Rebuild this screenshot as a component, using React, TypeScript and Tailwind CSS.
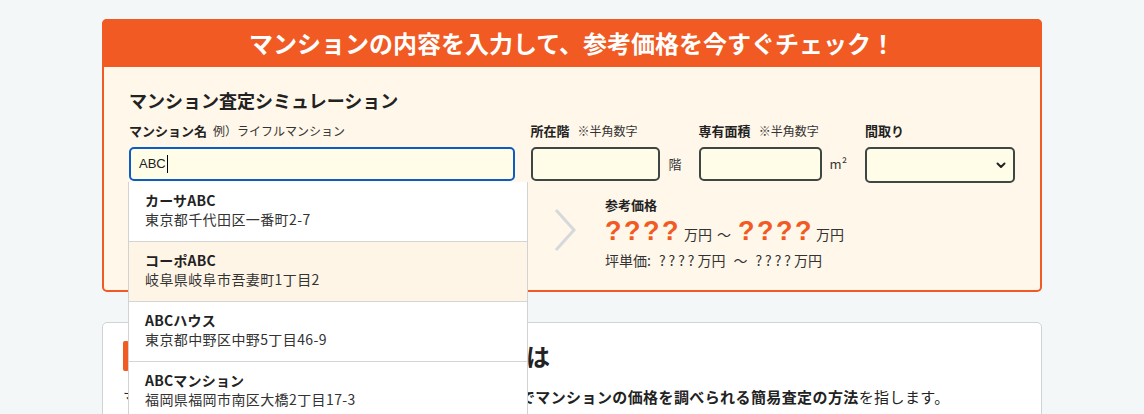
import React from "react";

const items = [
  { name: "カーサABC", addr: "東京都千代田区一番町2-7", hl: false },
  { name: "コーポABC", addr: "岐阜県岐阜市吾妻町1丁目2", hl: true },
  { name: "ABCハウス", addr: "東京都中野区中野5丁目46-9", hl: false },
  { name: "ABCマンション", addr: "福岡県福岡市南区大橋2丁目17-3", hl: false },
  { name: "ABCレジデンス", addr: "大阪府大阪市北区梅田1丁目1-1", hl: false },
];

export default function App() {
  return (
    <div
      className="min-h-screen bg-[#f4f7f8] pt-[19px] text-[#222]"
      style={{ fontFamily: '"Noto Sans CJK JP", "Noto Sans", sans-serif' }}
    >
      <div className="mx-auto w-[940px]">
        {/* Simulation card */}
        <div className="rounded-[5px] border-2 border-[#f15a22] bg-[#fff7e9]">
          <div className="-mx-[2px] -mt-[2px] flex h-[48px] items-center justify-center rounded-t-[5px] bg-[#f15a22] text-[24px] font-bold leading-none text-white">
            マンションの内容を入力して、参考価格を今すぐチェック！
          </div>
          <div className="px-[25px] pt-[20px] pb-[20px]">
            <div className="text-[18px] font-bold leading-[26px]">マンション査定シミュレーション</div>
            <div className="mt-[8px] flex">
              {/* name */}
              <div className="relative w-[386px]">
                <div className="flex items-baseline text-[13px] font-bold leading-[20px]">
                  マンション名
                  <span className="ml-[6px] text-[12px] font-normal text-[#333]">例）ライフルマンション</span>
                </div>
                <div className="mt-[6px] flex h-[34px] items-center rounded-[5px] border-2 border-[#0b5cc5] bg-[#fffde8] px-[8px] text-[13px]" style={{ fontFamily: '"Liberation Sans", sans-serif' }}>
                  ABC<span className="ml-px h-[18px] w-px bg-black" />
                </div>
                <div className="absolute left-[-1px] top-[calc(100%-1px)] z-10 w-[400px] border-x border-[#d2d2d2] bg-white">
                  {items.map((it) => (
                    <div
                      key={it.name}
                      className={`h-[60px] border-b border-[#d4d4d4] px-[16px] pt-[9px] text-[14px] leading-[19px] ${it.hl ? "bg-[#fff5e6]" : "bg-white"}`}
                    >
                      <div className="font-bold tracking-[0.2px]">{it.name}</div>
                      <div className="tracking-[0.4px] text-[#333]">{it.addr}</div>
                    </div>
                  ))}
                </div>
              </div>
              {/* floor */}
              <div className="ml-[16px]">
                <div className="flex items-baseline text-[13px] font-bold leading-[20px]">
                  所在階
                  <span className="ml-[8px] text-[12px] font-normal text-[#333]">※半角数字</span>
                </div>
                <div className="mt-[6px] flex items-center">
                  <div className="h-[34px] w-[129px] rounded-[5px] border-2 border-[#3f4745] bg-[#fffde8]" />
                  <span className="ml-[9px] text-[13px] text-[#333]">階</span>
                </div>
              </div>
              {/* area */}
              <div className="ml-[17px]">
                <div className="flex items-baseline text-[13px] font-bold leading-[20px]">
                  専有面積
                  <span className="ml-[8px] text-[12px] font-normal text-[#333]">※半角数字</span>
                </div>
                <div className="mt-[6px] flex items-center">
                  <div className="h-[34px] w-[123px] rounded-[5px] border-2 border-[#3f4745] bg-[#fffde8]" />
                  <span className="ml-[8px] text-[13px] text-[#333]">m²</span>
                </div>
              </div>
              {/* layout */}
              <div className="ml-[18px]">
                <div className="text-[13px] font-bold leading-[20px]">間取り</div>
                <div className="mt-[6px] flex h-[36px] w-[150px] items-center justify-end rounded-[5px] border-2 border-[#3f4745] bg-[#fffde8] pr-[6px]">
                  <svg width="12" height="12" viewBox="0 0 12 12">
                    <path d="M2.5 4.5 L6 8 L9.5 4.5" fill="none" stroke="#222" strokeWidth="2" strokeLinecap="round" strokeLinejoin="round" />
                  </svg>
                </div>
              </div>
            </div>
            {/* result */}
            <div className="mt-[12px] flex">
              <div className="w-[386px]" />
              <div className="ml-[38px] mt-[13px] flex h-[44px] w-[24px] items-center">
                <svg width="24" height="44" viewBox="0 0 24 44">
                  <path d="M3 2 L21 22 L3 42" fill="none" stroke="#d6d9dc" strokeWidth="3" />
                </svg>
              </div>
              <div className="ml-[28px]">
                <div className="text-[13px] font-bold leading-[20px]">参考価格</div>
                <div className="flex items-baseline leading-[32px]">
                  <span className="text-[27px] font-bold tracking-[2.5px] text-[#f15a22]" style={{ fontFamily: '"Liberation Sans", sans-serif' }}>????</span>
                  <span className="ml-[3px] text-[14px] text-[#333]">万円</span>
                  <span className="ml-[5px] text-[14px] text-[#333]">～</span>
                  <span className="ml-[7px] text-[27px] font-bold tracking-[2.5px] text-[#f15a22]" style={{ fontFamily: '"Liberation Sans", sans-serif' }}>????</span>
                  <span className="ml-[2px] text-[14px] text-[#333]">万円</span>
                </div>
                <div className="flex items-baseline text-[14px] leading-[20px] text-[#333]">
                  <span>坪単価:</span>
                  <span className="ml-[8px] tracking-[3px]">????</span>
                  <span>万円</span>
                  <span className="ml-[8px]">～</span>
                  <span className="ml-[8px] tracking-[3px]">????</span>
                  <span>万円</span>
                </div>
              </div>
            </div>
          </div>
        </div>

        {/* Explanation card */}
        <div className="mt-[30px] rounded-[5px] border border-[#cfd3d5] bg-white px-[20px] pt-[18px] pb-[30px]">
          <div className="flex items-center">
            <div className="h-[30px] w-[6px] rounded-[2px] bg-[#f15a22]" />
            <h2 className="ml-[14px] text-[24px] font-bold leading-[30px]">マンション査定シミュレーションとは</h2>
          </div>
          <p className="mt-[14px] text-[15px] leading-[24px] text-[#222]">
            マンション査定シミュレーションとは、「物件情報の入力」
            <span className="font-bold tracking-[0.4px]">でマンションの価格を調べられる簡易査定の方法</span>
            <span className="tracking-[0.4px]">を指します。</span>
          </p>
        </div>
      </div>
    </div>
  );
}
